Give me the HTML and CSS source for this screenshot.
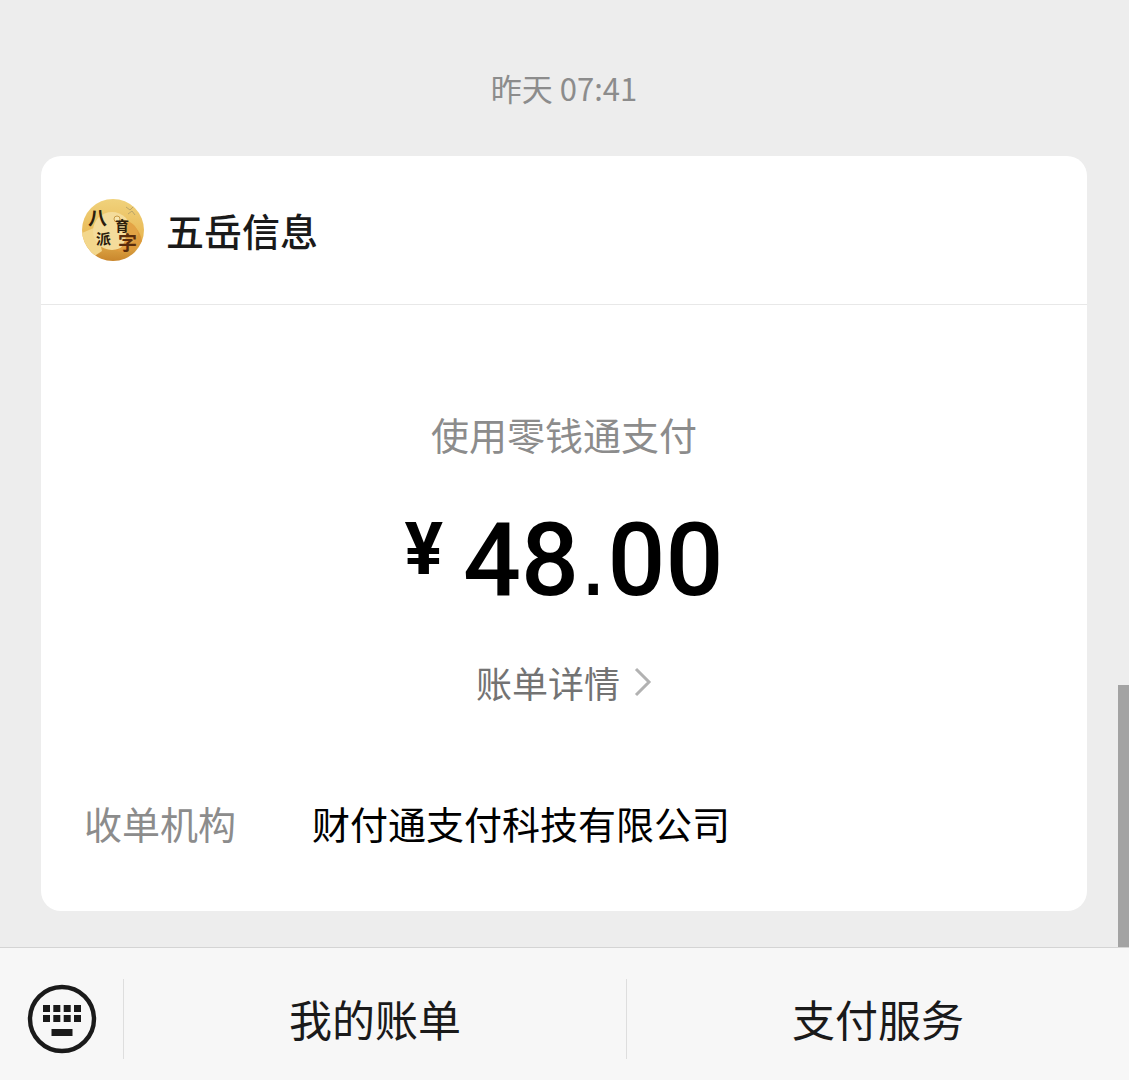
FILE: index.html
```html
<!DOCTYPE html>
<html lang="zh-CN">
<head>
    <meta charset="UTF-8" />
    <meta name="viewport" content="width=device-width, initial-scale=1.0" />
    <title>五岳信息</title>
    <link rel="stylesheet" href="styles.css">
</head>
<body>
    <main class="chat">
        <time class="time">昨天 07:41</time>

        <section class="card">
            <header class="card-header">
                <svg class="avatar" viewBox="0 0 62 62" aria-hidden="true">
                    <defs>
                        <clipPath id="round"><circle cx="31" cy="31" r="31" /></clipPath>
                        <linearGradient id="gold" x1="0" y1="0" x2="0" y2="1">
                            <stop offset="0" stop-color="#f0d27c" />
                            <stop offset="0.6" stop-color="#e9b955" />
                            <stop offset="1" stop-color="#c9862c" />
                        </linearGradient>
                    </defs>
                    <g clip-path="url(#round)">
                        <rect width="62" height="62" fill="url(#gold)" />
                        <path d="M0 34L14 28L20 52L8 60L0 56Z" fill="#f3d78c" />
                        <path d="M36 24C50 22 58 30 60 42C54 54 40 56 30 50Z" fill="#dd9a3c" />
                        <circle cx="30" cy="32" r="19" fill="#f4dc9b" />
                        <path d="M40 20Q56 24 56 36Q52 46 36 52Q50 38 40 20Z" fill="#e3a345" />
                        <circle cx="35" cy="20" r="3" fill="#f7e6b0" stroke="#c79a45" />
                        <path d="M44 8l4 3l4-4M46 15l4-3l3 4" fill="none" stroke="#b9a468" />
                        <text class="ink" x="6" y="26" font-size="19">八</text>
                        <text class="ink" x="33" y="32" font-size="14">育</text>
                        <text class="ink" x="14" y="45" font-size="15">派</text>
                        <text class="ink ink-brown" x="36" y="51" font-size="19">字</text>
                    </g>
                </svg>
                <h1 class="merchant">五岳信息</h1>
            </header>

            <div class="payment">
                <p class="method">使用零钱通支付</p>
                <p class="amount"><span class="currency">¥</span><span>48<span class="point">.</span>00</span></p>
                <a class="detail" href="#">
                    账单详情
                    <svg class="arrow" viewBox="0 0 18 30" aria-hidden="true">
                        <path d="M2 2L15 15L2 28" fill="none" stroke="#b2b2b2" stroke-width="3" />
                    </svg>
                </a>
            </div>

            <dl class="info">
                <dt>收单机构</dt>
                <dd>财付通支付科技有限公司</dd>
            </dl>
        </section>

        <div class="scrollbar"></div>
    </main>

    <nav class="menu">
        <button class="keyboard" type="button" aria-label="键盘">
            <svg class="keyboard-icon" viewBox="0 0 70 70" aria-hidden="true">
                <circle cx="35" cy="35" r="32" fill="none" stroke="#1a1a1a" stroke-width="4.4" />
                <g fill="#1a1a1a">
                    <rect x="16" y="21" width="7" height="7" />
                    <rect x="26.3" y="21" width="7" height="7" />
                    <rect x="36.7" y="21" width="7" height="7" />
                    <rect x="47" y="21" width="7" height="7" />
                    <rect x="16" y="31" width="7" height="7" />
                    <rect x="26.3" y="31" width="7" height="7" />
                    <rect x="36.7" y="31" width="7" height="7" />
                    <rect x="47" y="31" width="7" height="7" />
                    <rect x="24.5" y="45" width="21" height="7" />
                </g>
            </svg>
        </button>
        <button class="menu-item" type="button">我的账单</button>
        <button class="menu-item" type="button">支付服务</button>
    </nav>
</body>
</html>
```
FILE: styles.css
```css
* {
    box-sizing: border-box;
}
body {
    display: flex;
    flex-direction: column;
    min-height: 100vh;
    margin: 0;
    background-color: #ededed;
    font-family: "Noto Sans CJK SC", sans-serif;
    font-size: 38px;
    line-height: 56px;
    color: #000;
}
h1,
p,
dl,
dd {
    margin: 0;
}
.chat {
    position: relative;
    flex: 1;
    padding: 66px 42px 36px 41px;
}
.time {
    display: block;
    margin-bottom: 46px;
    font-size: 31px;
    line-height: 44px;
    text-align: center;
    color: #8c8c8c;
}
.card {
    background-color: #fff;
    border-radius: 20px;
}
.card-header {
    display: flex;
    align-items: center;
    gap: 22px;
    padding: 43px 41px;
    border-bottom: 1px solid #e8e8e8;
}
.avatar {
    width: 62px;
    height: 62px;
}
.ink {
    font-weight: bold;
    fill: #2b1c0c;
}
.ink-brown {
    fill: #5a2c0c;
}
.merchant {
    font-size: 38px;
    font-weight: 500;
    line-height: 52px;
    color: #1a1a1a;
}
.payment {
    display: flex;
    flex-direction: column;
    align-items: center;
    padding: 101px 40px 85px;
}
.method {
    color: #8c8c8c;
}
.amount {
    display: flex;
    align-items: flex-start;
    gap: 20px;
    margin: 34px 0 30px;
    font-family: Roboto, sans-serif;
    font-size: 102px;
    font-weight: 500;
    line-height: 128px;
}
.currency {
    font-size: 72px;
    font-weight: 700;
    line-height: 108px;
}
.point {
    font-family: "DejaVu Sans", sans-serif;
    font-size: 90px;
    font-weight: 400;
    line-height: 1;
}
.detail {
    display: flex;
    align-items: center;
    gap: 14px;
    font-size: 36px;
    color: #737373;
    text-decoration: none;
}
.arrow {
    width: 18px;
    height: 30px;
}
.info {
    display: flex;
    gap: 76px;
    padding: 0 43px 60px;
}
.info dt {
    color: #8c8c8c;
}
.scrollbar {
    position: absolute;
    right: 0;
    bottom: 0;
    width: 11px;
    height: 262px;
    background-color: #a3a3a3;
}
.menu {
    display: flex;
    padding: 31px 0 21px;
    background-color: #f7f7f7;
    border-top: 1px solid #d4d4d4;
}
.menu button {
    height: 80px;
    padding: 0;
    border: none;
    background: none;
    font-family: inherit;
    font-size: 43px;
    color: #1a1a1a;
    cursor: pointer;
}
.menu .keyboard {
    display: flex;
    align-items: center;
    justify-content: center;
    width: 123px;
}
.keyboard-icon {
    width: 70px;
    height: 70px;
}
.menu .menu-item {
    flex: 1;
    padding-bottom: 2px;
    border-left: 1px solid #dedede;
}
```
